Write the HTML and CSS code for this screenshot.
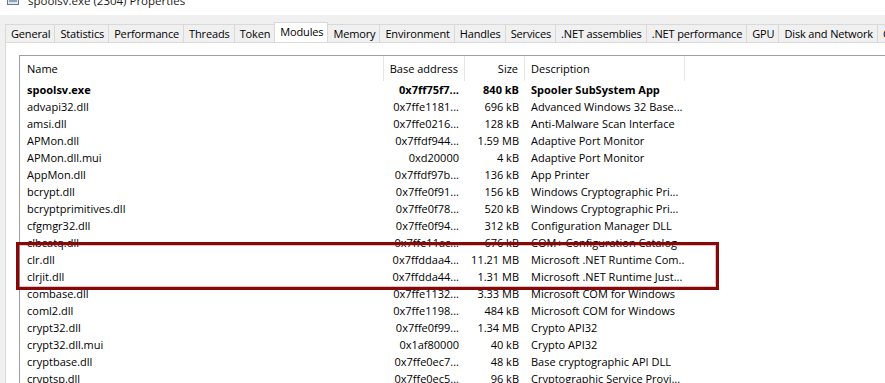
FILE: index.html
```html
<!DOCTYPE html>
<html lang="en">
<head>
    <meta charset="UTF-8">
    <title>spoolsv.exe (2304) Properties</title>
    <link rel="stylesheet" href="styles.css">
</head>
<body>

    <div class="titlebar">
        <svg class="app-icon" width="12" height="12" viewBox="0 0 12 12">
            <rect x="0.5" y="0.5" width="11" height="11" fill="#dfe6ee" stroke="#6d7785"/>
            <rect x="2" y="3" width="8" height="6" fill="#8aa3bf"/>
        </svg>
        <span class="title">spoolsv.exe (2304) Properties</span>
    </div>

    <div class="tabstrip">
        <div class="tab">General</div>
        <div class="tab">Statistics</div>
        <div class="tab">Performance</div>
        <div class="tab">Threads</div>
        <div class="tab">Token</div>
        <div class="tab active">Modules</div>
        <div class="tab">Memory</div>
        <div class="tab">Environment</div>
        <div class="tab">Handles</div>
        <div class="tab">Services</div>
        <div class="tab">.NET assemblies</div>
        <div class="tab">.NET performance</div>
        <div class="tab">GPU</div>
        <div class="tab">Disk and Network</div>
        <div class="tab">Comment</div>
    </div>

    <div class="panel">
        <div class="listview">
            <div class="header">
                <div class="col name">Name</div>
                <div class="col num">Base address</div>
                <div class="col num">Size</div>
                <div class="col desc">Description</div>
                <div class="col filler"></div>
            </div>
            <div id="rows"></div>
        </div>
    </div>

    <div class="highlight"></div>

    <script>
        const modules = [
            ["spoolsv.exe", "0x7ff75f7...", "840 kB", "Spooler SubSystem App"],
            ["advapi32.dll", "0x7ffe1181...", "696 kB", "Advanced Windows 32 Base..."],
            ["amsi.dll", "0x7ffe0216...", "128 kB", "Anti-Malware Scan Interface"],
            ["APMon.dll", "0x7ffdf944...", "1.59 MB", "Adaptive Port Monitor"],
            ["APMon.dll.mui", "0xd20000", "4 kB", "Adaptive Port Monitor"],
            ["AppMon.dll", "0x7ffdf97b...", "136 kB", "App Printer"],
            ["bcrypt.dll", "0x7ffe0f91...", "156 kB", "Windows Cryptographic Pri..."],
            ["bcryptprimitives.dll", "0x7ffe0f78...", "520 kB", "Windows Cryptographic Pri..."],
            ["cfgmgr32.dll", "0x7ffe0f94...", "312 kB", "Configuration Manager DLL"],
            ["clbcatq.dll", "0x7ffe11ac...", "676 kB", "COM+ Configuration Catalog"],
            ["clr.dll", "0x7ffddaa4...", "11.21 MB", "Microsoft .NET Runtime Com..."],
            ["clrjit.dll", "0x7ffdda44...", "1.31 MB", "Microsoft .NET Runtime Just..."],
            ["combase.dll", "0x7ffe1132...", "3.33 MB", "Microsoft COM for Windows"],
            ["coml2.dll", "0x7ffe1198...", "484 kB", "Microsoft COM for Windows"],
            ["crypt32.dll", "0x7ffe0f99...", "1.34 MB", "Crypto API32"],
            ["crypt32.dll.mui", "0x1af80000", "40 kB", "Crypto API32"],
            ["cryptbase.dll", "0x7ffe0ec7...", "48 kB", "Base cryptographic API DLL"],
            ["cryptsp.dll", "0x7ffe0ec5...", "96 kB", "Cryptographic Service Provi..."]
        ];

        const rowsEl = document.getElementById("rows");
        modules.forEach((m, i) => {
            const row = document.createElement("div");
            row.className = i === 0 ? "row main" : "row";
            row.innerHTML = `
                <div class="col name">${m[0]}</div>
                <div class="col num">${m[1]}</div>
                <div class="col num">${m[2]}</div>
                <div class="col desc">${m[3]}</div>
                <div class="col filler"></div>
            `;
            rowsEl.appendChild(row);
        });
    </script>
</body>
</html>
```

FILE: styles.css
```css
/* Finestra */
html, body {
    height: 383px;
    overflow: hidden;
}
body {
    margin: 0;
    background-color: #f0f0f0;
    font-family: "Open Sans", "Noto Sans", sans-serif;
    font-size: 11px;
    color: #000000;
    display: flex;
    flex-direction: column;
}
.titlebar {
    height: 15px;
    flex: none;
    background: #ffffff;
    overflow: hidden;
    display: flex;
    align-items: flex-start;
    padding-left: 7px;
}
.app-icon {
    margin-top: -7px;
    flex: none;
}
.title {
    font-size: 11.5px;
    line-height: 16px;
    margin-top: -7px;
    margin-left: 9px;
    color: #1a1a1a;
    white-space: nowrap;
}

/* Schede */
.tabstrip {
    display: flex;
    flex: none;
    align-items: flex-end;
    padding: 7px 0 0 5px;
    white-space: nowrap;
    overflow: hidden;
}
.tab {
    height: 17px;
    line-height: 17px;
    padding: 0 4px 0 5px;
    letter-spacing: -0.15px;
    border: 1px solid #d9d9d9;
    border-left: none;
    border-bottom: none;
    background: #f0f0f0;
    flex: none;
}
.tab:first-child {
    border-left: 1px solid #d9d9d9;
}
.tab.active {
    height: 20px;
    line-height: 17px;
    background: #ffffff;
    border-left: 1px solid #d9d9d9;
    margin-left: -1px;
    margin-bottom: -1px;
    position: relative;
    z-index: 1;
}

/* Pannello */
.panel {
    flex: 1;
    min-height: 0;
    overflow: hidden;
    background: #ffffff;
    border-top: 1px solid #d9d9d9;
    border-left: 1px solid #d9d9d9;
    margin-left: 5px;
    padding: 12px 0 0 13px;
}
.listview {
    border-top: 1px solid #a0a0a0;
    border-left: 1px solid #a0a0a0;
    height: 100%;
}
.header, .row {
    display: grid;
    grid-template-columns: 364px 81px 60px 160px 1fr;
}
.header {
    height: 25px;
    line-height: 25px;
}
.header .col {
    border-right: 1px solid #e5e5e5;
}
.header .col.filler {
    border-right: none;
}
.row {
    height: 17px;
    line-height: 17px;
}
.row.main {
    font-weight: bold;
}
.col {
    white-space: nowrap;
    overflow: hidden;
}
.col.name {
    padding-left: 7px;
}
.col.num {
    text-align: right;
    padding-right: 6px;
}
.col.desc {
    padding-left: 6px;
}

/* Riquadro evidenziato */
.highlight {
    position: absolute;
    left: 16px;
    top: 242px;
    width: 697px;
    height: 42px;
    border: 3px solid #870808;
    box-shadow: inset 0 0 0 1px rgba(135, 8, 8, 0.25);
}
```
